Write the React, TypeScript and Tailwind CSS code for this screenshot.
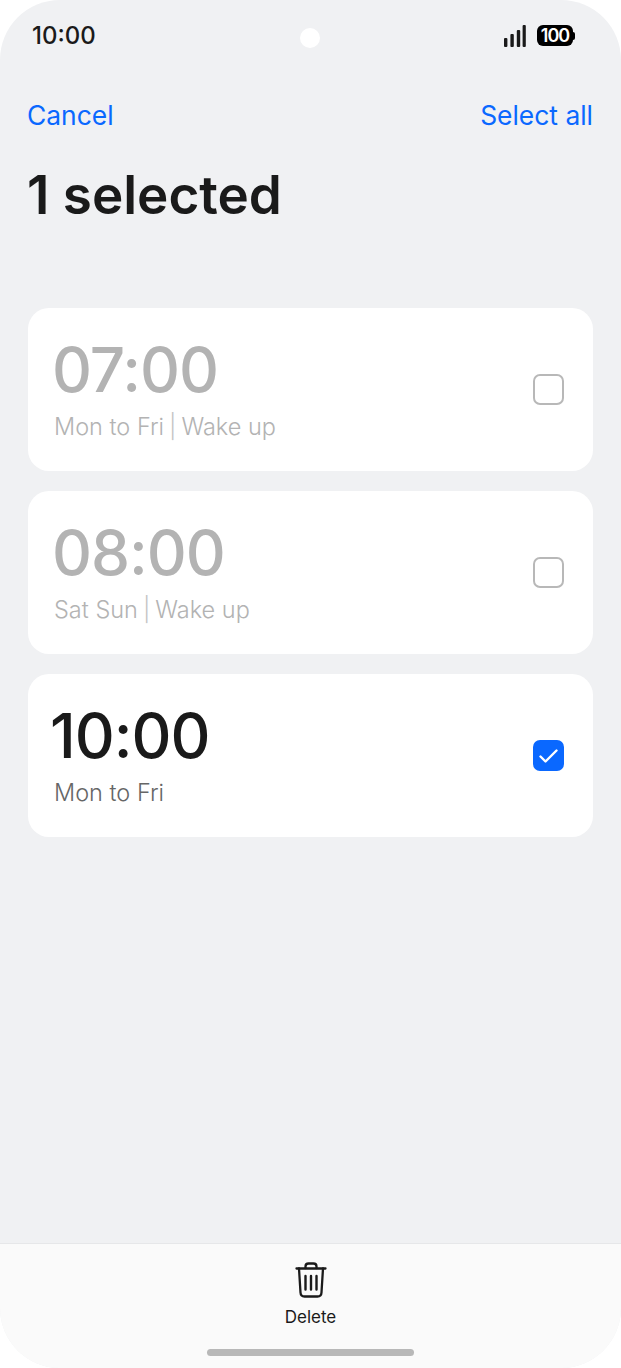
const alarms = [
  { time: "07:00", label: "Mon to Fri | Wake up", checked: false },
  { time: "08:00", label: "Sat Sun | Wake up", checked: false },
  { time: "10:00", label: "Mon to Fri", checked: true },
];

function SignalIcon() {
  return (
    <svg width="22" height="22" viewBox="0 0 22 22" fill="#1a1a1a">
      <rect x="0" y="13" width="3.4" height="9" rx="1" />
      <rect x="6.4" y="9" width="3.4" height="13" rx="1" />
      <rect x="12.8" y="5" width="3.4" height="17" rx="1" />
      <rect x="18.6" y="0" width="3.2" height="22" rx="1" />
    </svg>
  );
}

function Battery() {
  return (
    <div className="flex items-center">
      <div className="flex h-[21px] w-[36px] items-center justify-center rounded-[6px] bg-black text-[18px] leading-none font-semibold text-white tracking-[-1px]">
        100
      </div>
      <div className="h-[8px] w-[2px] rounded-r-[2px] bg-black" />
    </div>
  );
}

function TrashIcon() {
  return (
    <svg width="32" height="36" viewBox="0 0 32 36" fill="none" stroke="#1a1a1a" strokeWidth="2.3" strokeLinecap="round" strokeLinejoin="round">
      <path d="M1.5 6.5H30.5" />
      <path d="M10.5 6V4.5C10.5 2.8 11.8 1.5 13.5 1.5H18.5C20.2 1.5 21.5 2.8 21.5 4.5V6" />
      <path d="M4 6.5L5.5 30.5C5.6 33 7 34.5 9.5 34.5H22.5C25 34.5 26.4 33 26.5 30.5L28 6.5" />
      <path d="M10.5 14V27.5M16 14V27.5M21.5 14V27.5" strokeWidth="2.4" />
    </svg>
  );
}

function AlarmCard({ time, label, checked }: { time: string; label: string; checked: boolean }) {
  const parts = label.split(" | ");
  return (
    <div className="flex h-[163px] items-center justify-between rounded-[21px] bg-white pl-[27px] pr-[29px]">
      <div className="-mt-[2px]">
        <div className={`text-[62px] leading-[70px] font-medium tracking-[-1px] ${checked ? "-ml-[5px] text-[#1a1a1a]" : "-ml-[3px] text-[#b3b3b3]"}`}>
          {time}
        </div>
        <div className={`-ml-[1px] mt-[7px] text-[23.5px] leading-[30px] font-light ${checked ? "text-[#666666]" : "text-[#b3b3b3]"}`}>
          {parts[0]}
          {parts[1] && (
            <>
              <span className="mx-[5px] text-[#c4c4c4]">|</span>
              {parts[1]}
            </>
          )}
        </div>
      </div>
      {checked ? (
        <div className="flex h-[31px] w-[31px] items-center justify-center rounded-[7px] bg-[#0a68ff]">
          <svg width="19" height="14" viewBox="0 0 19 14" fill="none" stroke="white" strokeWidth="2.4" strokeLinecap="round" strokeLinejoin="round">
            <path d="M1.5 7.5L6.5 12.5L17.5 1.5" />
          </svg>
        </div>
      ) : (
        <div className="h-[31px] w-[31px] rounded-[7px] border-2 border-[#b8b8b8] bg-white" />
      )}
    </div>
  );
}

export default function App() {
  return (
    <div className="bg-white font-['Inter',sans-serif]">
      <div className="relative flex h-[1368px] w-[621px] flex-col overflow-hidden rounded-[60px] bg-[#f0f1f3]">
        {/* status bar */}
        <div className="flex h-[70px] items-center justify-between pl-[32px] pr-[46px] pt-[1px]">
          <div className="text-[24px] leading-none font-medium text-[#1a1a1a]">10:00</div>
          <div className="flex items-center gap-[11px]">
            <SignalIcon />
            <Battery />
          </div>
        </div>
        <div className="absolute top-[28px] left-[300px] h-[20px] w-[20px] rounded-full bg-white" />

        <div className="flex items-center justify-between pl-[27px] pr-[28px] pt-[12px]">
          <button className="text-[26.4px] leading-[66px] text-[#0a68ff]">Cancel</button>
          <button className="text-[26.4px] leading-[66px] text-[#0a68ff]">Select all</button>
        </div>
        <h1 className="mt-[14px] pl-[27px] text-[53px] leading-[66px] font-semibold text-[#1a1a1a]">1 selected</h1>

        <div className="mt-[80px] flex flex-1 flex-col gap-[20px] px-[28px]">
          {alarms.map((a) => (
            <AlarmCard key={a.time} {...a} />
          ))}
        </div>

        {/* bottom action bar */}
        <div className="flex h-[125px] flex-col items-center border-t border-[#e6e7e9] bg-[#fafafa] pt-[18px]">
          <TrashIcon />
          <div className="mt-[9px] text-[17px] leading-[20px] text-[#1a1a1a]">Delete</div>
          <div className="mt-[22px] h-[7px] w-[207px] rounded-full bg-[#b8b8b8]" />
        </div>
      </div>
    </div>
  );
}
